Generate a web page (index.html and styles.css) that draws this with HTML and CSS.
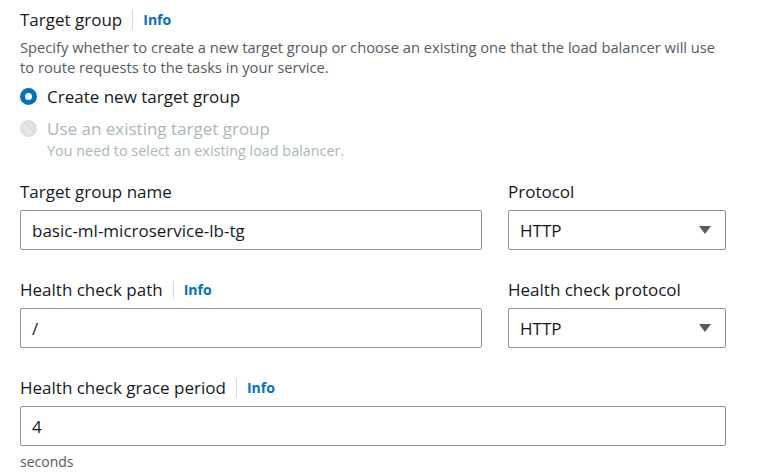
FILE: index.html
```html
<!DOCTYPE html>
<html>
<head>
<meta charset="utf-8">
<link rel="stylesheet" href="styles.css">
</head>
<body>
<div class="panel">
  <div class="header">
    <span class="title">Target group</span>
    <span class="sep"></span>
    <a class="info">Info</a>
  </div>
  <p class="desc">Specify whether to create a new target group or choose an existing one that the load balancer will use to route requests to the tasks in your service.</p>
  <div class="radios">
    <div class="radio">
      <span class="dot on"></span>
      <span class="rlabel">Create new target group</span>
    </div>
    <div class="radio disabled">
      <span class="dot off"></span>
      <div class="rtext">
        <span class="rlabel">Use an existing target group</span>
        <span class="rdesc">You need to select an existing load balancer.</span>
      </div>
    </div>
  </div>
  <div class="row">
    <div class="field grow">
      <div class="label">Target group name</div>
      <div class="input">basic-ml-microservice-lb-tg</div>
    </div>
    <div class="field side">
      <div class="label">Protocol</div>
      <div class="input select">HTTP<span class="caret"></span></div>
    </div>
  </div>
  <div class="row">
    <div class="field grow">
      <div class="label">Health check path<span class="sep"></span><a class="info">Info</a></div>
      <div class="input">/</div>
    </div>
    <div class="field side">
      <div class="label">Health check protocol</div>
      <div class="input select">HTTP<span class="caret"></span></div>
    </div>
  </div>
  <div class="row">
    <div class="field grow">
      <div class="label">Health check grace period<span class="sep"></span><a class="info">Info</a></div>
      <div class="input">4</div>
      <div class="hint">seconds</div>
    </div>
  </div>
</div>
</body>
</html>
```
FILE: styles.css
```css
* { box-sizing: border-box; }
html, body { margin: 0; padding: 0; background: #fff; }
body {
  font-family: "Open Sans", "Noto Sans", sans-serif;
  color: #16191f;
  width: 764px;
  height: 474px;
  overflow: hidden;
}
.panel { padding: 7px 38px 0 20px; }
.header { display: flex; align-items: center; height: 24px; }
.title { font-size: 17px; }
.sep { display: inline-block; width: 1px; height: 20px; background: #d5dbdb; margin: 0 10px; vertical-align: middle; }
.info { color: #0073bb; font-weight: 700; font-size: 14px; }
.desc { margin: 6px 0 0; font-size: 14.7px; line-height: 20px; color: #545b64; width: 705px; }
.radios { margin-top: 8px; }
.radio { display: flex; align-items: flex-start; gap: 10px; }
.radio + .radio { margin-top: 9px; }
.dot { width: 17px; height: 17px; border-radius: 50%; flex: none; margin-top: 3px; }
.dot.on { background: #fff; border: 5px solid #0073bb; }
.dot.off { background: repeating-linear-gradient(45deg, #d5dbdb 0 1px, #eaeded 1px 2px); border: 1px solid #d5dbdb; }
.rlabel { font-size: 17px; line-height: 23px; }
.rtext { display: flex; flex-direction: column; }
.disabled .rlabel { color: #aab7b8; }
.rdesc { font-size: 14.4px; line-height: 21px; color: #aab7b8; }
.row { display: flex; gap: 26px; margin-top: 20px; }
.row + .row { margin-top: 29px; }
.field { display: flex; flex-direction: column; }
.grow { flex: 1; }
.side { width: 218px; flex: none; }
.label { font-size: 17px; line-height: 22px; height: 22px; margin-bottom: 7px; display: flex; align-items: center; }
.label .sep { height: 18px; }
.input {
  height: 40px;
  border: 1px solid #879596;
  border-radius: 2px;
  padding: 0 11px;
  font-size: 17px;
  display: flex;
  align-items: center;
}
.select { justify-content: space-between; }
.caret { width: 0; height: 0; border-left: 6px solid transparent; border-right: 6px solid transparent; border-top: 8px solid #545b64; margin-right: 3px; }
.hint { font-size: 14px; color: #545b64; margin-top: 6px; }
```
